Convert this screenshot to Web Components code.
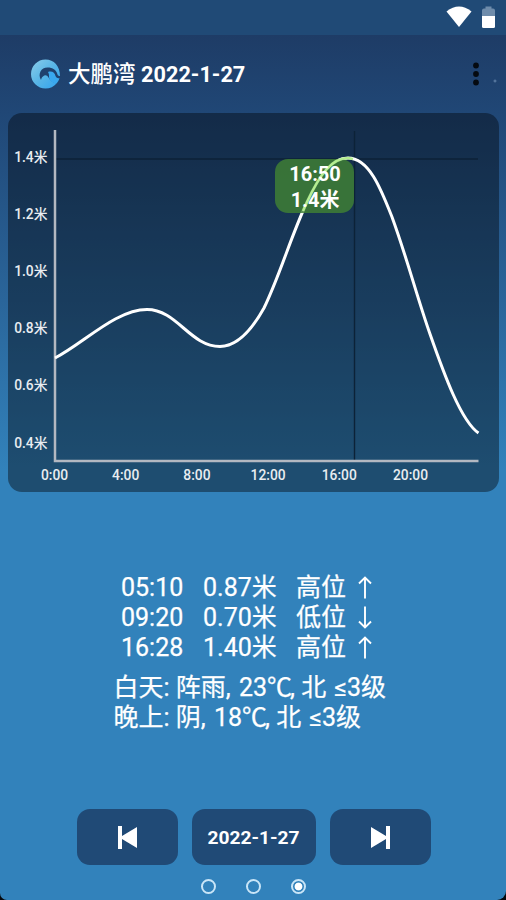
<!DOCTYPE html>
<html lang="zh-CN">
<head>
<meta charset="utf-8">
<meta name="viewport" content="width=device-width, initial-scale=1">
<title>大鹏湾</title>
<style>
    html, body {
        margin: 0;
        height: 100%;
        background: #05080c;
    }

    body {
        font-family: Roboto, "Noto Sans CJK SC", sans-serif;
        color: #fff;
        overflow: hidden;
    }
</style>
</head>
<body>
<tide-app></tide-app>

<script>
function attach (element, html) {
    const template = document.createElement('template');
    template.innerHTML = html;
    const root = element.attachShadow({ mode: 'open' });
    root.appendChild(template.content.cloneNode(true));
    return root;
}

class StatusBar extends HTMLElement {
    constructor () {
        super();
        attach(this, `
            <style>
                :host {
                    display: flex;
                    justify-content: flex-end;
                    align-items: flex-start;
                    gap: 10px;
                    height: 35px;
                    padding: 6px 11px 0 0;
                    box-sizing: border-box;
                    background: #204a76;
                }
                svg { display: block; }
            </style>
            <svg width="26" height="22" viewBox="0 0 26 22">
                <path d="M0.5 5.5Q13-4.5 25.5 5.5L13 21Z" fill="#fff"/>
            </svg>
            <svg width="13" height="23" viewBox="0 0 13 23">
                <path d="M3.5 2.5V.5h6v2h1.5a2 2 0 0 1 2 2V10H0V4.500a2 2 0 0 1 2-2z" fill="#6e8cab"/>
                <path d="M0 10h13v10.500a1.500 1.500 0 0 1-1.500 1.500h-10A1.500 1.500 0 0 1 0 20.500z" fill="#fff"/>
            </svg>
        `);
    }
}

class AppHeader extends HTMLElement {
    constructor () {
        super();
        attach(this, `
            <style>
                :host {
                    display: flex;
                    align-items: center;
                    height: 78px;
                    padding: 0 26px 0 31px;
                    box-sizing: border-box;
                    /* faint star on the sky */
                    background: radial-gradient(circle at 495px 46px, #6f8fb4 0, transparent 2px);
                }
                h1 {
                    flex: 1;
                    margin: 0 0 0 7px;
                    font-size: 22.500px;
                    line-height: 30px;
                    font-weight: 500;
                    white-space: nowrap;
                }
                ::slotted(b) { font-size: 21.700px; }
                svg { display: block; }
            </style>
            <svg width="30" height="30" viewBox="0 0 30 30">
                <defs>
                    <linearGradient id="wave" x1="0" y1="0" x2="1" y2="1">
                        <stop offset="0" stop-color="#8acdea"/>
                        <stop offset=".5" stop-color="#58b5e6"/>
                        <stop offset="1" stop-color="#2fa2f0"/>
                    </linearGradient>
                </defs>
                <path d="M29 17C29 7 23 0.500 14.500 0.500A14.500 14.500 0 0 0 14.500 29.500C19 29.500 23 27.500 25.500 24.500C22 23.500 19 21.500 17.500 18.500C16 16 14 15.500 12 17.500C11 18 10.500 19 10 21C6.500 15 10 8.500 16.500 8.500C22 8.500 25 11 26 14C26.500 16 27.500 17.500 29 17Z" fill="url(#wave)"/>
                <path d="M17 13C21 11.500 24 14 24.500 17C25.500 19 27 19.500 28.500 19C28 21.500 26.500 23.500 25.500 24.500C21 24 18 21 18 18C18 16 18 14.500 17 13Z" fill="#39a8ef"/>
            </svg>
            <h1><slot></slot></h1>
            <svg width="8" height="24" viewBox="0 0 8 24">
                <circle cx="4" cy="3.500" r="2.900" fill="#050a10"/>
                <circle cx="4" cy="12" r="2.900" fill="#050a10"/>
                <circle cx="4" cy="20.500" r="2.900" fill="#050a10"/>
            </svg>
        `);
    }
}

class TideChart extends HTMLElement {
    constructor () {
        super();
        this._shadowRoot = attach(this, `
            <style>
                :host {
                    display: block;
                    height: 379px;
                    margin: 0 7px 0 8px;
                    border-radius: 14px;
                    background: rgba(2, 5, 9, 0.42);
                    overflow: hidden;
                }
                svg { display: block; }
                text { fill: #e9edf1; font-size: 13.800px; font-weight: 500; }
                .tip { fill: #fff; font-size: 20px; font-weight: 700; }
            </style>
            <svg width="491" height="379" viewBox="8 113 491 379">
                <path d="M55 159H478M354.500 131V460" stroke="#0c2237" stroke-width="1.400" fill="none"/>
                <path d="M55 130V461H478.500" stroke="#b3b8c1" stroke-width="2.500" fill="none"/>
                <path d="M55 358C84 343 116 309.500 147 309.500C177 309.500 190 346.500 220 346.500C239 346.500 254 326 264 308C280 275 291 236 307 202C320 174 332 158 348 158C369 158 381 189 392 217C407 258 417 297 430 334C444 374 461 421 478.500 433" stroke="#fff" stroke-width="3" fill="none"/>
                <rect x="275" y="159" width="79" height="54" rx="13" fill="#3f8035" fill-opacity=".84"/>
                <path d="M303 211L307 202C320 174 332 158 348 158L353 159" stroke="#b5ee91" stroke-width="2.500" fill="none"/>
                <text class="tip" x="315" y="181" text-anchor="middle">16:50</text>
                <text class="tip" x="315" y="207" text-anchor="middle">1.4米</text>
                <g id="labels"></g>
            </svg>
        `);
    }

    connectedCallback () {
        const labels = this._shadowRoot.querySelector('#labels');
        const heights = this.getAttribute('heights').split(',');
        const hours = this.getAttribute('hours').split(',');

        heights.forEach((text, i) => labels.appendChild(this._label(text, 47.5, 162 + i * 57.1, 'end')));
        hours.forEach((text, i) => labels.appendChild(this._label(text, 54.5 + i * 71.2, 480, 'middle')));
    }

    _label (text, x, y, anchor) {
        const label = document.createElementNS('http://www.w3.org/2000/svg', 'text');
        label.setAttribute('x', x);
        label.setAttribute('y', y);
        label.setAttribute('text-anchor', anchor);
        label.textContent = text;
        return label;
    }
}

class TideRow extends HTMLElement {
    constructor () {
        super();
        const root = attach(this, `
            <style>
                :host {
                    display: grid;
                    grid-template-columns: 82px 93px 60px 20px;
                    height: 30px;
                    line-height: 30px;
                    white-space: nowrap;
                }
                svg { display: block; margin-top: 3px; }
            </style>
            <span><slot name="time"></slot></span>
            <span><slot name="height"></slot></span>
            <span><slot></slot></span>
            <svg width="18" height="23" viewBox="0 0 18 23" fill="none" stroke="#fff" stroke-width="1.900">
                <path d="M9 22.500V1.500M3 7.500L9 1.500L15 7.500"/>
            </svg>
        `);
        if (this.hasAttribute('low')) {
            root.querySelector('path').setAttribute('d', 'M9 0.5V21.500M3 15.500L9 21.500L15 15.500');
        }
    }
}

class WeatherLine extends HTMLElement {
    constructor () {
        super();
        attach(this, `
            <style>
                :host { display: block; height: 30px; line-height: 30px; white-space: nowrap; }
                ::slotted(span) { margin-left: 2px; }
                ::slotted(small) { font-size: 25px; margin-right: -2px; }
            </style>
            <slot></slot>
        `);
    }
}

class NavButton extends HTMLElement {
    constructor () {
        super();
        attach(this, `
            <style>
                :host {
                    display: flex;
                    align-items: center;
                    justify-content: center;
                    width: 101px;
                    height: 56px;
                    border-radius: 13px;
                    background: #204a76;
                    font-size: 19.200px;
                    font-weight: 700;
                }
                :host([wide]) { width: 124px; }
            </style>
            <slot></slot>
        `);
    }
}

class PageDots extends HTMLElement {
    constructor () {
        super();
        const root = attach(this, `
            <style>
                :host { display: flex; justify-content: center; gap: 30px; }
                i {
                    width: 15px;
                    height: 15px;
                    box-sizing: border-box;
                    border: 2px solid #c9e5f7;
                    border-radius: 50%;
                }
                i.on { background: radial-gradient(circle, #fff 0 3.500px, transparent 4.300px); }
            </style>
            <i></i><i></i><i></i>
        `);
        root.querySelectorAll('i')[this.getAttribute('current')].classList.add('on');
    }
}

class TideApp extends HTMLElement {
    constructor () {
        super();
        attach(this, `
            <style>
                :host {
                    display: flex;
                    flex-direction: column;
                    height: 900px;
                    border-radius: 0 0 9px 7px;
                    overflow: hidden;
                    background: linear-gradient(#1e3c66 35px, #204776 113px, #2a659a 300px, #3282bb 470px);
                }
                .tides, .weather {
                    font-size: 25px;
                    -webkit-text-stroke: 0.25px #fff;
                }
                .tides { margin: 81px 0 0 121px; }
                .weather { margin: 10px 0 0 113.500px; }
                nav { display: flex; gap: 14px; margin: 76px 0 0 76.500px; }
                nav svg { display: block; }
                page-dots { margin-top: 14px; }
            </style>
            <status-bar></status-bar>
            <app-header>大鹏湾 <b>2022-1-27</b></app-header>
            <tide-chart heights="1.4米,1.2米,1.0米,0.8米,0.6米,0.4米" hours="0:00,4:00,8:00,12:00,16:00,20:00"></tide-chart>
            <div class="tides">
                <tide-row><span slot="time">05:10</span><span slot="height">0.87米</span>高位</tide-row>
                <tide-row low><span slot="time">09:20</span><span slot="height">0.70米</span>低位</tide-row>
                <tide-row><span slot="time">16:28</span><span slot="height">1.40米</span>高位</tide-row>
            </div>
            <div class="weather">
                <weather-line>白天: 阵雨, <span>23</span><small>℃</small>, 北 <span>≤3级</span></weather-line>
                <weather-line>晚上: 阴, <span>18</span><small>℃</small>, 北 <span>≤3级</span></weather-line>
            </div>
            <nav>
                <nav-button>
                    <svg width="19" height="23" viewBox="0 0 19 23"><path d="M0 0H4V10L19 1V22L4 13V23H0Z" fill="#fff"/></svg>
                </nav-button>
                <nav-button wide>2022-1-27</nav-button>
                <nav-button>
                    <svg width="19" height="23" viewBox="0 0 19 23"><path d="M19 0H15V10L0 1V22L15 13V23H19Z" fill="#fff"/></svg>
                </nav-button>
            </nav>
            <page-dots current="2"></page-dots>
        `);
    }
}

customElements.define('status-bar', StatusBar);
customElements.define('app-header', AppHeader);
customElements.define('tide-chart', TideChart);
customElements.define('tide-row', TideRow);
customElements.define('weather-line', WeatherLine);
customElements.define('nav-button', NavButton);
customElements.define('page-dots', PageDots);
customElements.define('tide-app', TideApp);
</script>
</body>
</html>
